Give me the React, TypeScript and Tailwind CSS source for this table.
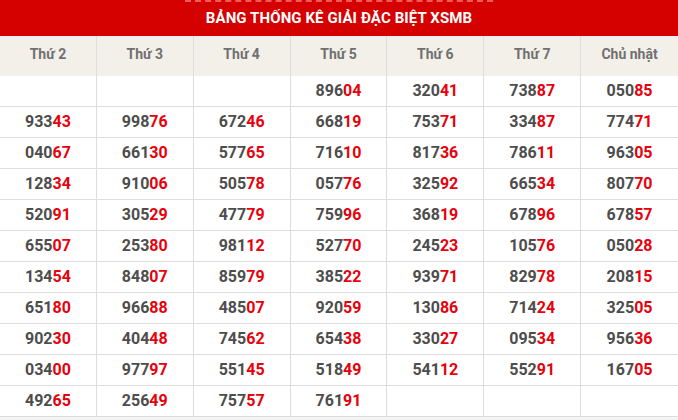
const days = ["Thứ 2", "Thứ 3", "Thứ 4", "Thứ 5", "Thứ 6", "Thứ 7", "Chủ nhật"];

const rows: string[][] = [
    ["", "", "", "89604", "32041", "73887", "05085"],
    ["93343", "99876", "67246", "66819", "75371", "33487", "77471"],
    ["04067", "66130", "57765", "71610", "81736", "78611", "96305"],
    ["12834", "91006", "50578", "05776", "32592", "66534", "80770"],
    ["52091", "30529", "47779", "75996", "36819", "67896", "67857"],
    ["65507", "25380", "98112", "52770", "24523", "10576", "05028"],
    ["13454", "84807", "85979", "38522", "93971", "82978", "20815"],
    ["65180", "96688", "48507", "92059", "13086", "71424", "32505"],
    ["90230", "40448", "74562", "65438", "33027", "09534", "95636"],
    ["03400", "97797", "55145", "51849", "54112", "55291", "16705"],
    ["49265", "25649", "75757", "76191", "", "", ""],
];

const Num = ({ value }: { value: string }) => {
    if (!value) return null;
    return (
        <span>
            {value.slice(0, 3)}
            <span className="text-[#e8000b]">{value.slice(3)}</span>
        </span>
    );
};

const App = () => {
    return (
        <div className="w-[678px] h-[420px] bg-[#f4f4f4] font-['Roboto',sans-serif] overflow-hidden">
            <div className="h-9 bg-[#d50000] flex justify-center">
                <h2 className="w-[308px] h-9 border-t-2 border-dashed border-[#f35a5a] flex items-center justify-center text-white font-bold text-[15px] tracking-[0.1px] pb-[2px]">
                    BẢNG THỐNG KÊ GIẢI ĐẶC BIỆT XSMB
                </h2>
            </div>
            <div className="grid grid-cols-7 bg-white">
                {days.map((d, i) => (
                    <div
                        key={d}
                        className={`h-10 flex items-center justify-center pb-1 bg-[#f3efe9] text-[#707070] text-[14px] font-bold ${i < 6 ? "border-r border-[#dddddd]" : ""}`}
                    >
                        {d}
                    </div>
                ))}
                {rows.map((row, r) =>
                    row.map((v, c) => (
                        <div
                            key={`${r}-${c}`}
                            className={`h-[31px] flex items-center justify-center border-b border-[#dddddd] text-[16px] font-bold text-[#4d4d4d] ${c < 6 ? "border-r" : ""}`}
                        >
                            <Num value={v} />
                        </div>
                    ))
                )}
            </div>
        </div>
    );
};

export default App;
